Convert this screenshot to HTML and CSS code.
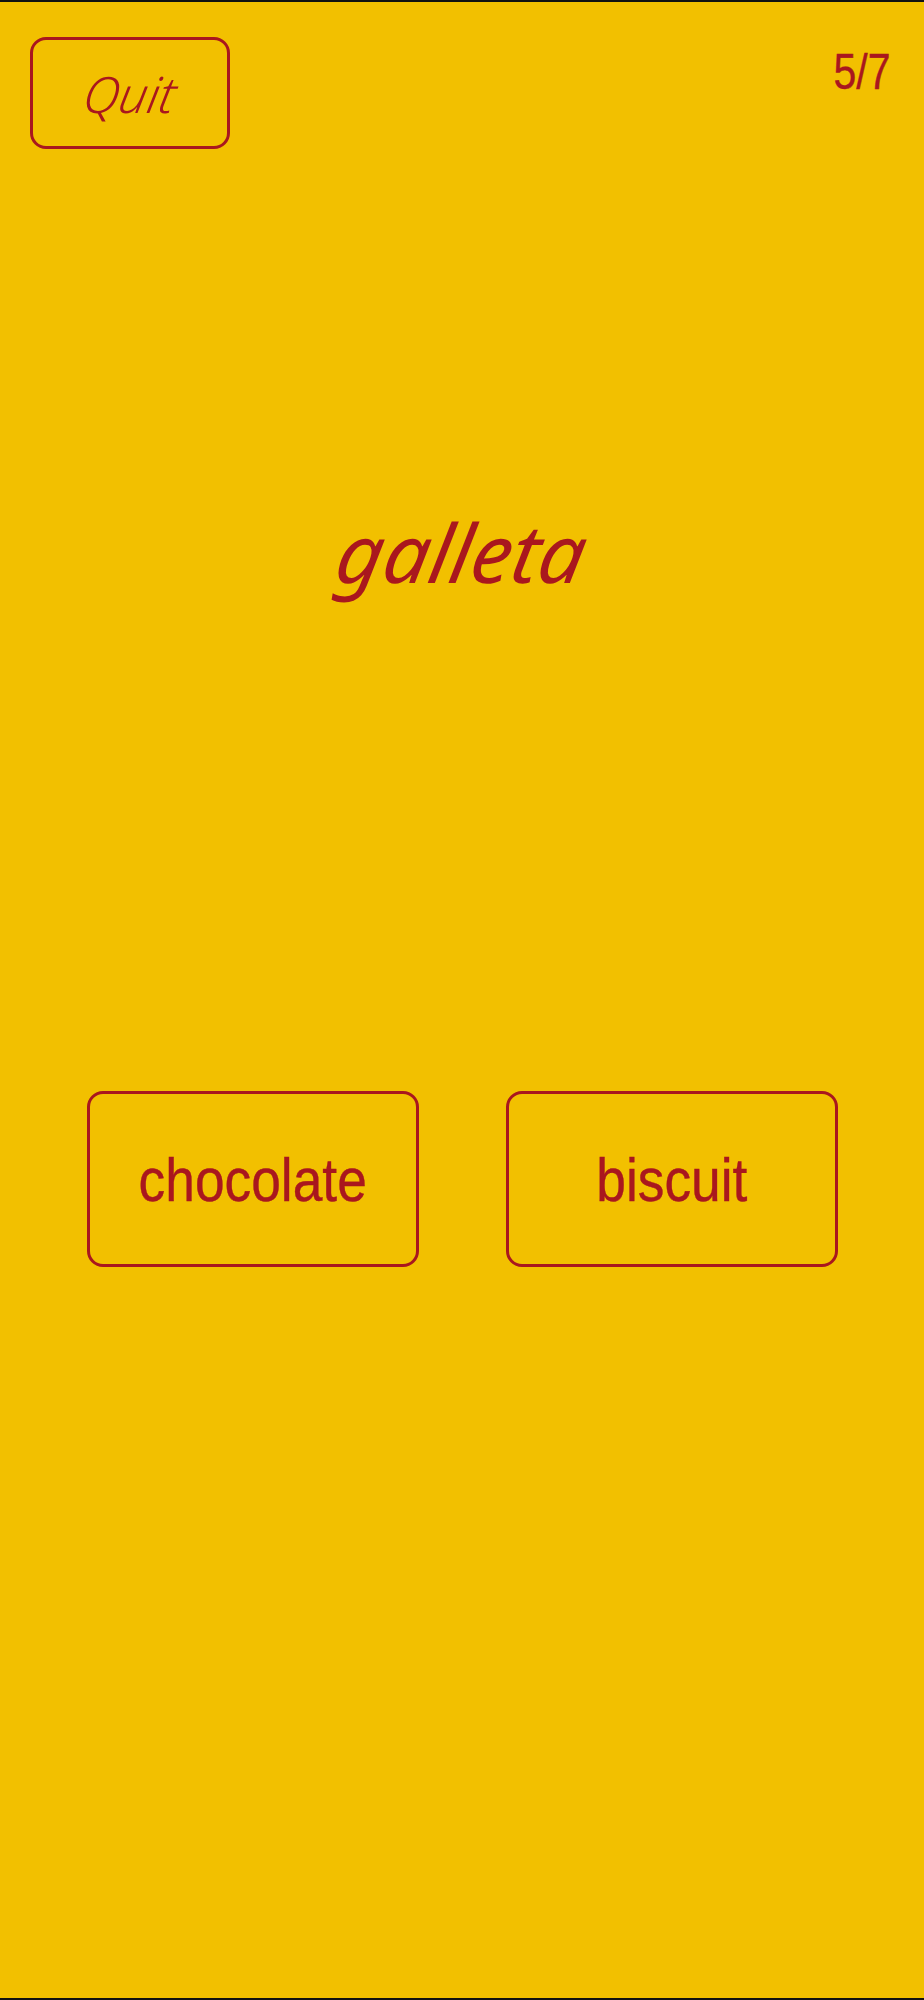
FILE: index.html
```html
<!DOCTYPE html>
<html lang="en">
<head>
    <meta charset="UTF-8" />
    <title>Flashcards</title>
    <meta name="viewport" content="width=device-width, initial-scale=1" />
    <link rel="stylesheet" href="styles.css">
</head>
<body>
    <!-- Top bar -->
    <div class="top-bar">
        <button class="quit-btn"><span class="script-text">Quit</span></button>
        <div class="progress"><span class="narrow-text">5/7</span></div>
    </div>
    <!-- Word to translate -->
    <div class="word"><span class="script-text">galleta</span></div>
    <!-- Answers -->
    <div class="answers">
        <button class="answer-btn"><span class="narrow-text">chocolate</span></button>
        <button class="answer-btn"><span class="narrow-text">biscuit</span></button>
    </div>
</body>
</html>
```

FILE: styles.css
```css
html, body {
    margin: 0;
    padding: 0;
}
body {
    box-sizing: border-box;
    height: 2000px;
    background: #f2c000;
    color: #a9171e;
    border-top: 2px solid #111;
    border-bottom: 2px solid #111;
    font-family: 'Liberation Sans', sans-serif;
    overflow: hidden;
}
button {
    background: none;
    color: inherit;
    font-family: inherit;
    border: 3px solid #a9171e;
    border-radius: 16px;
    padding: 0;
    box-sizing: border-box;
}
.script-text {
    display: inline-block;
    font-family: 'Noto Sans', sans-serif;
    font-style: italic;
    transform: skewX(-10deg);
}
.narrow-text {
    display: inline-block;
    transform: scaleX(0.86);
    -webkit-text-stroke: 0.4px #a9171e;
}
.top-bar {
    display: flex;
    justify-content: space-between;
    align-items: flex-start;
    padding: 35px 33px 0 30px;
}
.quit-btn {
    width: 200px;
    height: 112px;
}
.quit-btn .script-text {
    font-size: 50px;
    font-weight: 300;
    margin-top: 2px;
}
.progress {
    font-size: 50px;
    line-height: 59px;
    margin-top: 6px;
}
.progress .narrow-text {
    transform: scaleX(0.82);
    transform-origin: right;
}
.word {
    margin-top: 333px;
    height: 141px;
    line-height: 140px;
    text-align: center;
    font-size: 81px;
}
.answers {
    display: flex;
    gap: 87px;
    margin-top: 468px;
    padding-left: 87px;
}
.answer-btn {
    width: 332px;
    height: 176px;
    font-size: 62px;
}
```
